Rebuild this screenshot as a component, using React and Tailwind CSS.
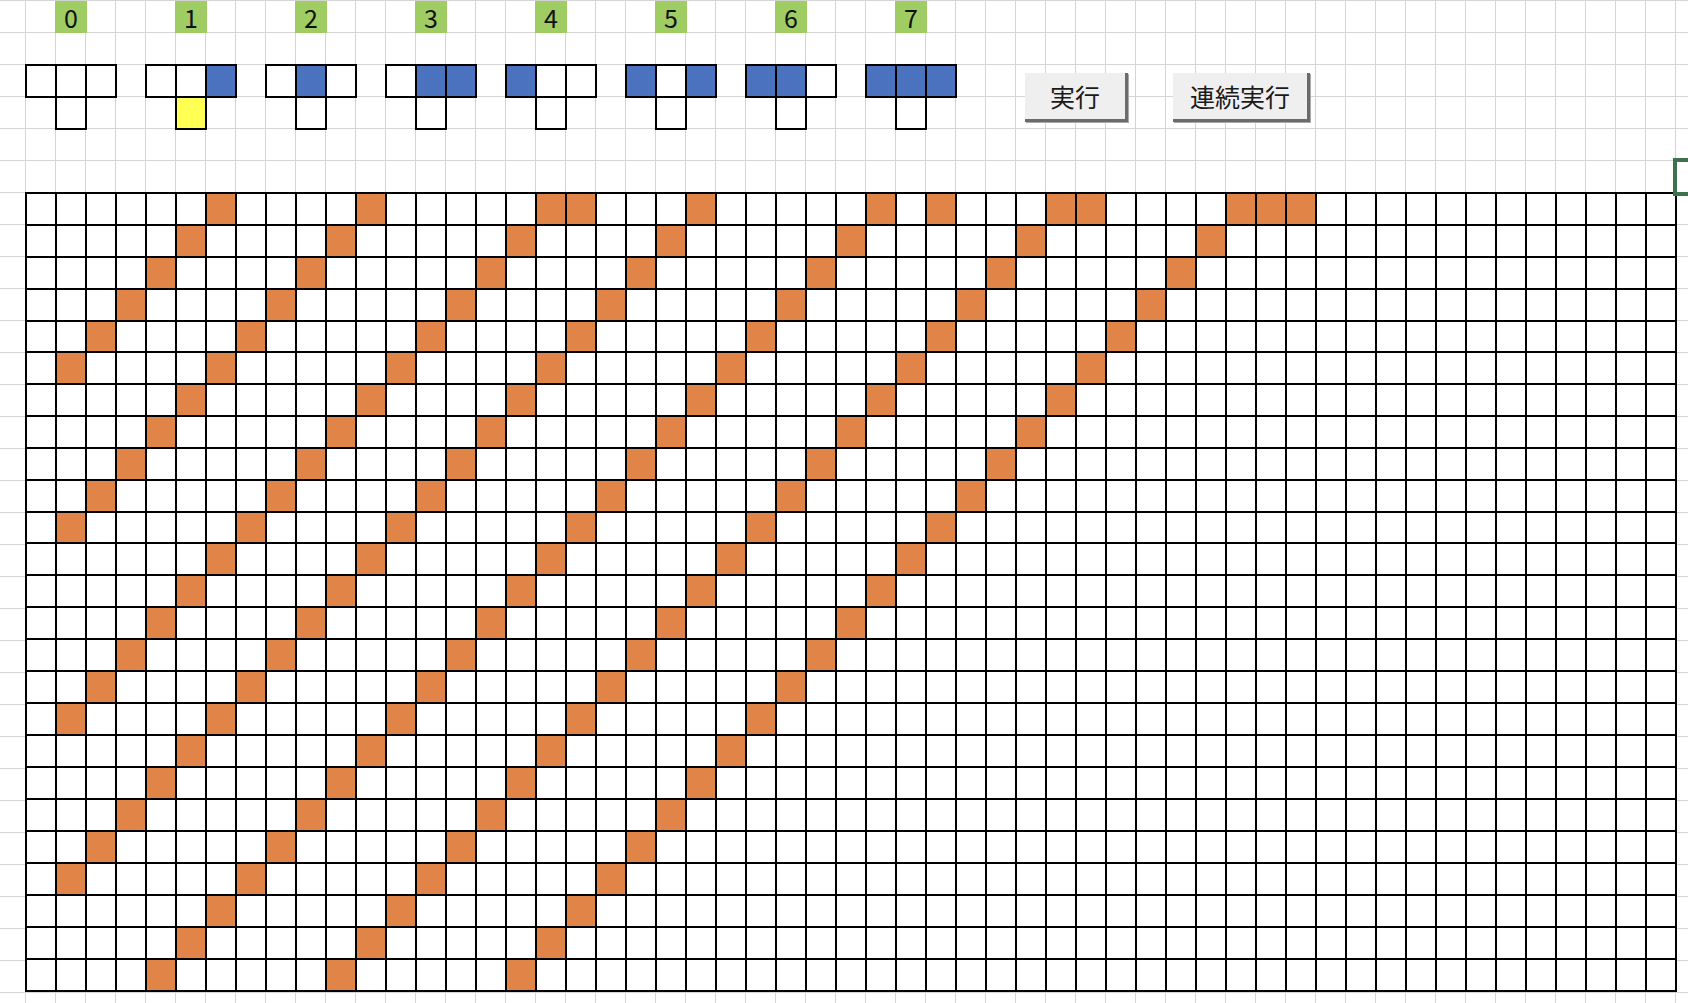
import React from "react";

const S = [6, 11, 17, 22, 28, 34, 40];
const ROW0 = new Set([6, 11, 17, 18, 22, 28, 30, 34, 35, 40, 41, 42]);
const COLS = 55;
const ROWS = 25;
const SHORT = new Set([4, 10]);

function isOn(r, c) {
  if (r === 0) return ROW0.has(c);
  return c >= 1 && S.includes(c + r);
}

function Rule({ k }) {
  const bits = [(k >> 2) & 1, (k >> 1) & 1, k & 1];
  return (
    <div className="flex flex-col">
      <div className="flex border-l-2 border-t-2 border-black">
        {bits.map((b, i) => (
          <div
            key={i}
            className={`w-[30px] h-[32px] border-r-2 border-b-2 border-black ${
              b ? "bg-[#4a72bf]" : "bg-white"
            }`}
          />
        ))}
      </div>
      <div
        className={`ml-[30px] w-[32px] h-[32px] border-x-2 border-b-2 border-black ${
          k === 1 ? "bg-[#ffff54]" : "bg-white"
        }`}
      />
    </div>
  );
}

function Button({ label, w }) {
  return (
    <div
      className={`mt-[9px] ${w} h-[49px] flex items-center justify-center bg-[#efefef] border-r-[3px] border-b-[3px] border-[#6b6b6b] shadow-[1px_1px_0_#a8a8a8] text-[25px] leading-[46px] text-[#1a1a1a]`}
    >
      {label}
    </div>
  );
}

export default function App() {
  return (
    <div className="relative w-[1688px] h-[1003px] overflow-hidden bg-white bg-[image:linear-gradient(to_right,#d4d4d4_1px,transparent_1px),linear-gradient(to_bottom,#d4d4d4_1px,transparent_1px)] bg-[size:30px_32px] bg-[position:25px_0px] font-['Noto_Sans_CJK_JP','Noto_Sans',sans-serif]">
      {/* header labels */}
      <div className="h-[64px] pt-[1px]">
        <div className="flex gap-[88px] pl-[55px]">
          {[0, 1, 2, 3, 4, 5, 6, 7].map((k) => (
            <div
              key={k}
              className="w-[32px] h-[32px] bg-[#a0cc64] text-center text-[25px] leading-[32px] text-[#111]"
            >
              {k}
            </div>
          ))}
        </div>
      </div>

      {/* rules + buttons */}
      <div className="h-[128px] flex items-start pl-[25px]">
        <div className="flex gap-[28px]">
          {[0, 1, 2, 3, 4, 5, 6, 7].map((k) => (
            <Rule key={k} k={k} />
          ))}
        </div>
        <div className="ml-[68px]">
          <Button label="実行" w="w-[103px]" />
        </div>
        <div className="ml-[45px]">
          <Button label="連続実行" w="w-[137px]" />
        </div>
      </div>

      {/* main grid */}
      <div className="ml-[25px] w-fit border-l-2 border-t-2 border-black">
        {Array.from({ length: ROWS }, (_, r) => (
          <div key={r} className="flex">
            {Array.from({ length: COLS }, (_, c) => (
              <div
                key={c}
                className={`w-[30px] ${
                  SHORT.has(r) ? "h-[31px]" : "h-[32px]"
                } border-r-2 border-b-2 border-black ${
                  isOn(r, c) ? "bg-[#e08447]" : "bg-white"
                }`}
              />
            ))}
          </div>
        ))}
      </div>

      {/* active cell selection */}
      <div className="absolute left-[1673px] top-[158px] w-[40px] h-[38px] border-4 border-[#3c734e]" />
    </div>
  );
}
